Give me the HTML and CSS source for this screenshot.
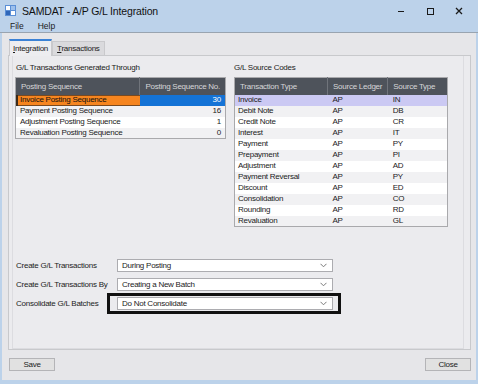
FILE: index.html
```html
<!DOCTYPE html>
<html lang="en">

<head>
    <meta charset="UTF-8">
    <title>SAMDAT - A/P G/L Integration</title>
    <link rel="stylesheet" href="styles.css">
</head>

<body>
    <div class="window">
        <div class="titlebar">
            <svg class="app-icon" width="11" height="11" viewBox="0 0 11 11">
                <rect x="0" y="0" width="11" height="11" fill="#5b8fd6" />
                <rect x="1" y="1" width="4" height="4" fill="#ffffff" />
                <rect x="6" y="1" width="4" height="4" fill="#9dc0ec" />
                <rect x="1" y="6" width="4" height="4" fill="#2f66b8" />
                <rect x="6" y="6" width="4" height="4" fill="#ffffff" />
            </svg>
            <span class="title">SAMDAT - A/P G/L Integration</span>
            <div class="controls">
                <svg width="8" height="8" viewBox="0 0 8 8"><line x1="1" y1="4.5" x2="7" y2="4.5" stroke="#1a1a1a" /></svg>
                <svg width="8" height="8" viewBox="0 0 8 8"><rect x="1.5" y="1.5" width="6" height="6" fill="none" stroke="#1a1a1a" /></svg>
                <svg width="8" height="8" viewBox="0 0 8 8"><path d="M1 1 L7 7 M7 1 L1 7" stroke="#1a1a1a" stroke-width="1.3" /></svg>
            </div>
        </div>
        <div class="menubar">
            <span>File</span>
            <span>Help</span>
        </div>

        <div class="client">
            <div class="tabs">
                <div class="tab active"><u>I</u>ntegration</div>
                <div class="tab"><u>T</u>ransactions</div>
            </div>

            <div class="panel">
                <div class="panel-inner">
                    <div class="groups">
                        <div class="group group-left">
                            <div class="group-label">G/L Transactions Generated Through</div>
                            <table class="grid">
                                <thead>
                                    <tr>
                                        <th class="col-seq">Posting Sequence</th>
                                        <th class="num">Posting Sequence No.</th>
                                    </tr>
                                </thead>
                                <tbody>
                                    <tr class="current">
                                        <td class="focus">Invoice Posting Sequence</td>
                                        <td class="num picked">30</td>
                                    </tr>
                                    <tr><td>Payment Posting Sequence</td><td class="num">16</td></tr>
                                    <tr><td>Adjustment Posting Sequence</td><td class="num">1</td></tr>
                                    <tr><td>Revaluation Posting Sequence</td><td class="num">0</td></tr>
                                </tbody>
                            </table>
                        </div>

                        <div class="group group-right">
                            <div class="group-label">G/L Source Codes</div>
                            <table class="grid codes">
                                <thead>
                                    <tr>
                                        <th class="col-type">Transaction Type</th>
                                        <th class="col-ledger">Source Ledger</th>
                                        <th>Source Type</th>
                                    </tr>
                                </thead>
                                <tbody>
                                    <tr class="selected"><td>Invoice</td><td>AP</td><td>IN</td></tr>
                                    <tr><td>Debit Note</td><td>AP</td><td>DB</td></tr>
                                    <tr><td>Credit Note</td><td>AP</td><td>CR</td></tr>
                                    <tr><td>Interest</td><td>AP</td><td>IT</td></tr>
                                    <tr><td>Payment</td><td>AP</td><td>PY</td></tr>
                                    <tr><td>Prepayment</td><td>AP</td><td>PI</td></tr>
                                    <tr><td>Adjustment</td><td>AP</td><td>AD</td></tr>
                                    <tr><td>Payment Reversal</td><td>AP</td><td>PY</td></tr>
                                    <tr><td>Discount</td><td>AP</td><td>ED</td></tr>
                                    <tr><td>Consolidation</td><td>AP</td><td>CO</td></tr>
                                    <tr><td>Rounding</td><td>AP</td><td>RD</td></tr>
                                    <tr><td>Revaluation</td><td>AP</td><td>GL</td></tr>
                                </tbody>
                            </table>
                        </div>
                    </div>

                    <div class="form">
                        <div class="field">
                            <label>Create G/L Transactions</label>
                            <div class="select">
                                <span>During Posting</span>
                                <svg width="7" height="5" viewBox="0 0 7 5"><path d="M0.5 0.8 L3.5 3.8 L6.5 0.8" fill="none" stroke="#7a7a7a" /></svg>
                            </div>
                        </div>
                        <div class="field">
                            <label>Create G/L Transactions By</label>
                            <div class="select">
                                <span>Creating a New Batch</span>
                                <svg width="7" height="5" viewBox="0 0 7 5"><path d="M0.5 0.8 L3.5 3.8 L6.5 0.8" fill="none" stroke="#7a7a7a" /></svg>
                            </div>
                        </div>
                        <div class="field highlighted">
                            <label>Consolidate G/L Batches</label>
                            <div class="select">
                                <span>Do Not Consolidate</span>
                                <svg width="7" height="5" viewBox="0 0 7 5"><path d="M0.5 0.8 L3.5 3.8 L6.5 0.8" fill="none" stroke="#7a7a7a" /></svg>
                            </div>
                            <div class="mark"></div>
                        </div>
                    </div>
                </div>
            </div>

            <div class="footer">
                <button class="btn">Save</button>
                <button class="btn">Close</button>
            </div>
        </div>
    </div>
</body>

</html>
```

FILE: styles.css
```css
* {
    margin: 0;
    padding: 0;
    box-sizing: border-box;
}

body {
    width: 478px;
    height: 384px;
    overflow: hidden;
    font-family: "Liberation Sans", Arial, sans-serif;
    color: #1b1b1b;
}

.window {
    width: 478px;
    height: 384px;
    background: #bcd2ea;
}

/* title and menu */
.titlebar {
    height: 21px;
    display: flex;
    align-items: center;
    padding-left: 5px;
}

.app-icon {
    margin-right: 6px;
}

.title {
    font-size: 10.5px;
    letter-spacing: -0.15px;
    color: #111;
}

.controls {
    margin-left: auto;
    display: flex;
    gap: 21px;
    padding-right: 15px;
}

.menubar {
    height: 12px;
    display: flex;
    gap: 14px;
    padding-left: 10px;
    font-size: 8.5px;
    line-height: 10px;
    border-bottom: 1px solid #99a4b0;
}

.client {
    margin: 0 2px;
    height: 347px;
    background: #e6e6e9;
    padding: 5px 5px 0 6px;
    font-size: 8px;
    letter-spacing: -0.25px;
}

/* tabs */
.tabs {
    height: 17px;
    display: flex;
    align-items: flex-end;
    padding-left: 1px;
}

.tab {
    height: 14px;
    line-height: 13px;
    padding: 0 4px;
    border: 1px solid #c9c9cc;
    border-bottom: none;
    background: #dadadd;
}

.tab.active {
    height: 17px;
    line-height: 15px;
    background: #ededf0;
    border-top: 2px solid #3b82d6;
    padding: 0 3px;
    position: relative;
    top: 1px;
}

.panel {
    height: 295px;
    border: 1px solid #c8c9cc;
    background: #ebebee;
}

.panel-inner {
    height: 100%;
    margin: 0 6px 0 3px;
    border-left: 1px solid #dcdce0;
    border-right: 1px solid #dcdce0;
    border-bottom: 1px solid #dcdce0;
    padding: 7px 0 0 2px;
}

/* grids */
.groups {
    display: flex;
    gap: 8px;
    height: 189px;
}

.group-left {
    width: 211px;
}

.group-right {
    width: 214px;
}

.group-label {
    height: 10px;
    line-height: 10px;
    margin-bottom: 4px;
    padding-left: 1px;
}

.group-right .group-label {
    padding-left: 0;
}

.grid {
    width: 100%;
    border-collapse: collapse;
    background: #fff;
    border: 1px solid #a9a9ac;
}

.grid th {
    height: 17px;
    background: #4e535b;
    color: #d6d6d8;
    font-weight: normal;
    text-align: left;
    padding: 0 5px;
    white-space: nowrap;
    border-left: 1px solid #70747b;
}

.grid th:first-child {
    border-left: none;
}

.grid td {
    height: 11px;
    line-height: 10px;
    padding: 0 4px;
    white-space: nowrap;
}

.grid tbody tr:nth-child(even) td {
    background: #f1f1f3;
}

.grid .num {
    text-align: right;
}

.col-seq {
    width: 124px;
}

.grid td.focus {
    background: #f6851f;
    color: #111;
    box-shadow: inset 2px 0 0 #3a2a1a, inset 0 1px 0 #7a4a20, inset 0 -1px 0 #7a4a20;
}

.grid td.picked {
    background: #1473d6;
    color: #fff;
}

.codes td {
    padding: 0 3px;
}

.codes td + td {
    padding-left: 5px;
}

.col-type {
    width: 93px;
}

.col-ledger {
    width: 60px;
}

.codes th {
    padding-left: 5px;
}

.grid tbody tr.selected td {
    background: #cbc9f3;
}

/* form */
.form {
    display: flex;
    flex-direction: column;
    gap: 6px;
    padding-top: 7px;
}

.field {
    display: flex;
    align-items: center;
    height: 13px;
    position: relative;
}

.field label {
    width: 102px;
    padding-left: 1px;
}

.select {
    width: 216px;
    height: 13px;
    background: #fff;
    border: 1px solid #acacb0;
    display: flex;
    align-items: center;
    justify-content: space-between;
    padding: 0 5px 0 4px;
}

.mark {
    position: absolute;
    left: 92px;
    top: -4px;
    width: 234px;
    height: 21px;
    border: 3px solid #111;
}

/* buttons */
.footer {
    display: flex;
    justify-content: space-between;
    margin-top: 8px;
    padding-left: 1px;
}

.btn {
    width: 46px;
    height: 13px;
    font-family: inherit;
    font-size: 8px;
    letter-spacing: -0.25px;
    background: #e1e1e1;
    border: 1px solid #b4b4b7;
    color: #1b1b1b;
}
```
